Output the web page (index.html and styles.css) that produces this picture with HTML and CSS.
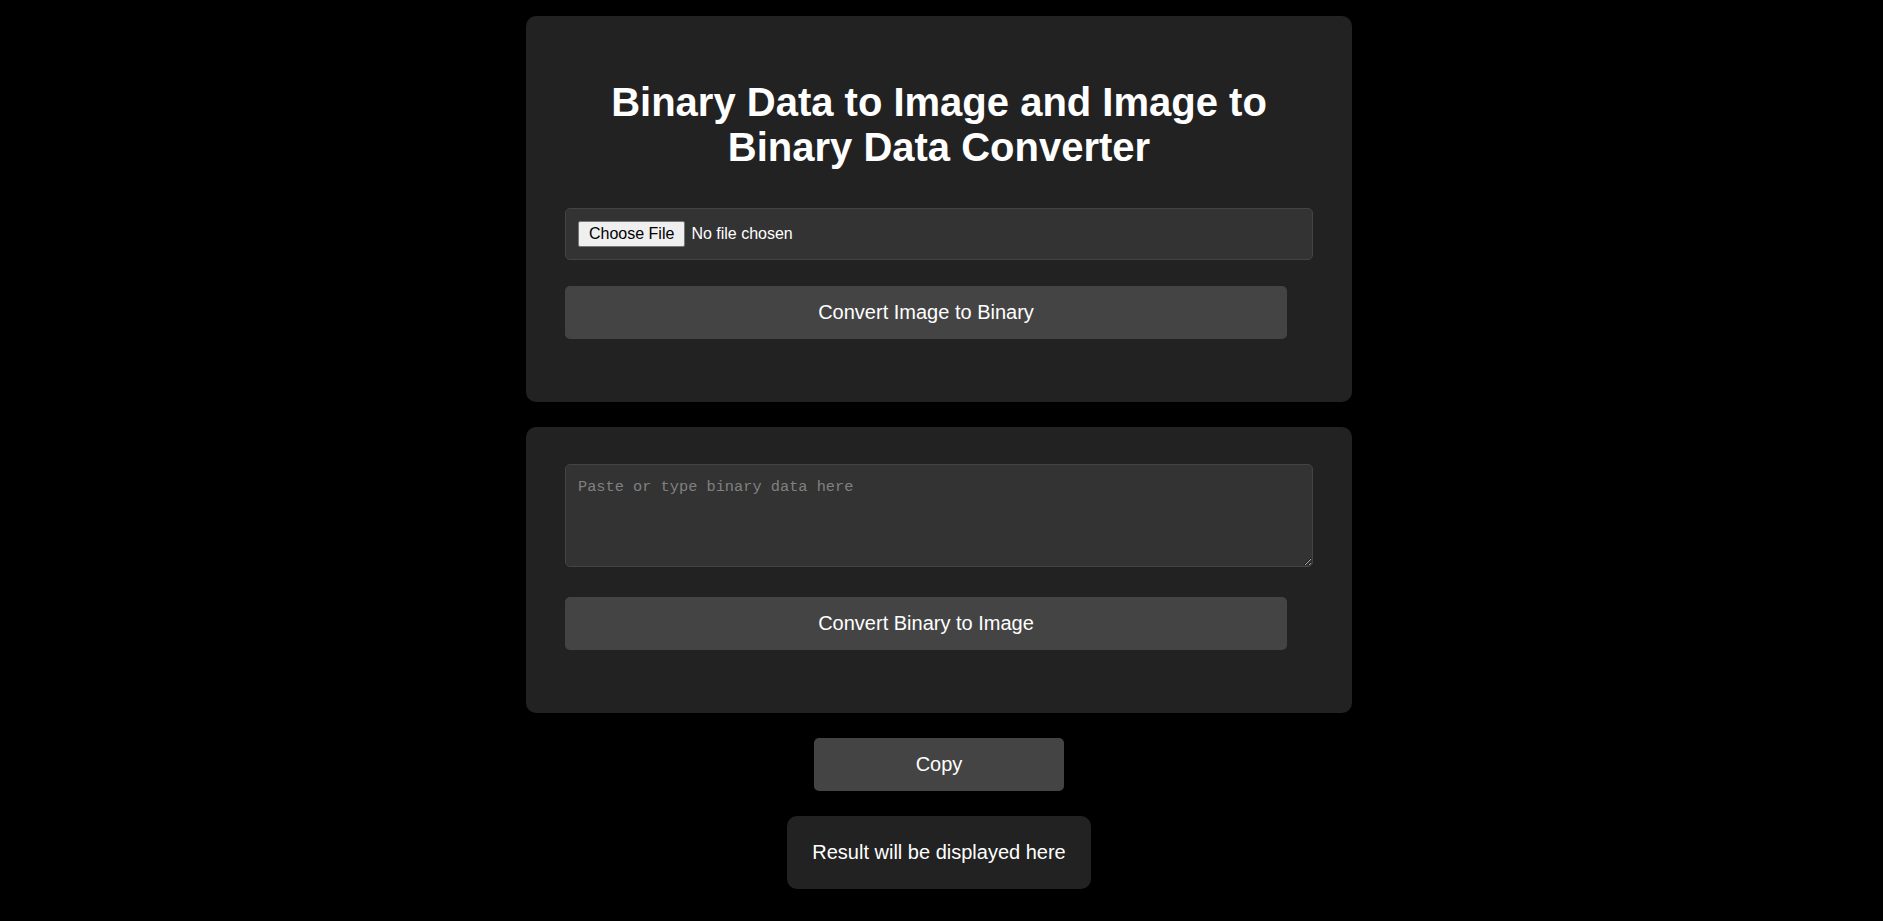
FILE: index.html
```html
<!DOCTYPE html>
<html lang="en">
<head>
<meta charset="utf-8">
<title>Binary Data to Image and Image to Binary Data Converter</title>
<link rel="stylesheet" href="styles.css">
</head>
<body>
<main class="page">
  <section class="card card-top">
    <h1 class="title">Binary Data to Image and Image to Binary Data Converter</h1>
    <input class="file-input" type="file" accept="image/*">
    <button class="btn btn-wide" type="button">Convert Image to Binary</button>
  </section>
  <section class="card card-bottom">
    <textarea class="binary-input" placeholder="Paste or type binary data here"></textarea>
    <button class="btn btn-wide" type="button">Convert Binary to Image</button>
  </section>
  <button class="btn btn-copy" type="button">Copy</button>
  <div class="result">Result will be displayed here</div>
</main>
</body>
</html>
```
FILE: styles.css
```css
html, body {
  margin: 0;
  padding: 0;
  background: #000;
}

body {
  font-family: "Liberation Sans", Arial, sans-serif;
  color: #fff;
}

.page {
  display: flex;
  flex-direction: column;
  align-items: center;
  gap: 25px;
  padding: 16px 5px 0 0;
}

.card {
  box-sizing: border-box;
  width: 826px;
  background: #222;
  border-radius: 10px;
  padding: 37px 39px;
}

.title {
  margin: 27px 0 38px;
  font-size: 40px;
  line-height: 45px;
  font-weight: bold;
  text-align: center;
  color: #fff;
}

.file-input {
  display: block;
  box-sizing: border-box;
  width: 100%;
  height: 52px;
  margin: 0 0 26px;
  padding: 12px;
  background: #333;
  border: 1px solid #444;
  border-radius: 5px;
  color: #fff;
  font-family: "Liberation Sans", Arial, sans-serif;
  font-size: 16px;
  line-height: 26px;
}

.file-input::file-selector-button {
  box-sizing: border-box;
  height: 26px;
  margin: 0 6px 0 0;
  padding: 0 10px;
  background: #efefef;
  border: 1px solid #767676;
  border-radius: 2px;
  color: #000;
  font-family: "Liberation Sans", Arial, sans-serif;
  font-size: 16px;
  vertical-align: top;
}

.binary-input {
  display: block;
  box-sizing: border-box;
  width: 100%;
  height: 103px;
  margin: 0 0 30px;
  padding: 13px 12px 12px;
  background: #333;
  border: 1px solid #444;
  border-radius: 5px;
  color: #fff;
  font-family: "Liberation Mono", "DejaVu Sans Mono", monospace;
  font-size: 15.3px;
  resize: vertical;
}

.binary-input::placeholder {
  color: #808080;
}

.btn {
  display: block;
  box-sizing: border-box;
  height: 53px;
  padding: 15px;
  background: #444;
  border: none;
  border-radius: 5px;
  color: #fff;
  font-family: "Liberation Sans", Arial, sans-serif;
  font-size: 20px;
  line-height: 23px;
  cursor: pointer;
}

.btn-wide {
  width: 722px;
  margin-bottom: 26px;
}

.btn-copy {
  width: 250px;
}

.result {
  padding: 25px;
  background: #222;
  border-radius: 10px;
  font-size: 20px;
  line-height: 23px;
  color: #fff;
}
```
